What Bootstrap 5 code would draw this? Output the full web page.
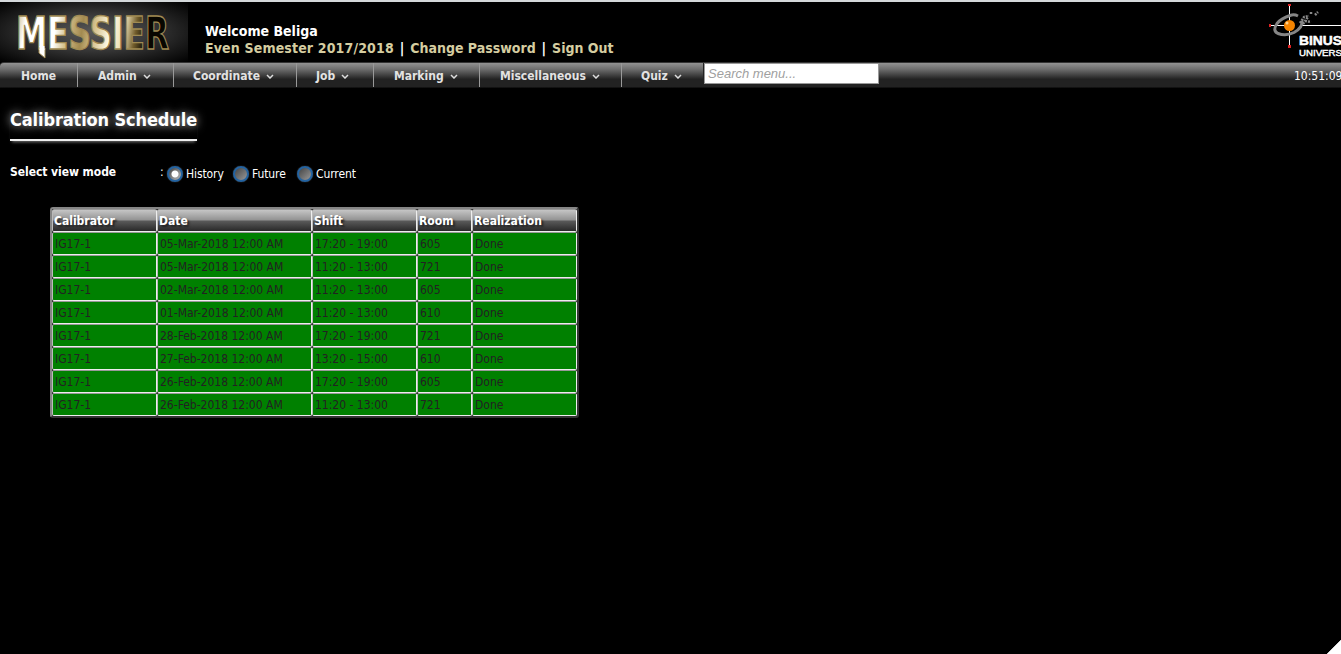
<!DOCTYPE html>
<html lang="en">
<head>
<meta charset="utf-8">
<title>Messier - Calibration Schedule</title>
<link href="https://cdn.jsdelivr.net/npm/bootstrap@5.3.0/dist/css/bootstrap.min.css" rel="stylesheet">
<style>
body{background:#000;color:#fff;font:12px/16px "DejaVu Sans Condensed","DejaVu Sans",sans-serif;font-stretch:condensed;height:654px;overflow:hidden}
.page{height:654px;border-top:2px solid #d4d8da;overflow:hidden}
.masthead{height:60px}
.brand{width:188px;height:60px;background:radial-gradient(ellipse at 50% 50%,#585858 0,#3a3a3a 40%,#1c1c1c 70%,#000 100%)}
.welcome{padding:21px 0 0 17px;font-size:14px;line-height:17px;font-weight:700}
.welcome a{color:#d5cda0;text-decoration:none}
.welcome .term{letter-spacing:.15px}
.welcome i{font-style:normal;margin:0 1.5px}
.uni{width:72px}
.menu{height:26px;border-top:1px solid #333;background:linear-gradient(#929292 0,#6d6d6d 25%,#3a3a3a 52%,#222 65%,#222 95%,#080808 100%);padding-left:1px;border-top-left-radius:4px}
.menu .nav-link{height:24px;padding:0 0 0 20px;line-height:26px;color:#e2e2e2;font-weight:700;border-right:1px solid #999;white-space:nowrap}
.menu .nav-link:nth-child(n+3){padding-left:19px}
.menu .nav-link:nth-child(5),.menu .nav-link:nth-child(6){padding-left:20px}
.menu .nav-link:nth-child(7){border-color:#222}
.menu .nav-link svg{margin-left:6px}
.finder{width:175px;height:21px;border:1px solid #999;border-radius:0;padding:0 3px;background:#fff;font:italic 13px "Liberation Sans",sans-serif}
.finder::placeholder{color:#a0a0a0}
.clock{width:47px;line-height:26px}
.title{width:187px;height:35px;margin:18px 0 0 10px;font-size:18px;line-height:27px;letter-spacing:-.12px;font-weight:700;white-space:nowrap;border-bottom:2px solid #eee;text-shadow:0 0 10px #ccc;box-shadow:0 3px 3px -2px #777}
.modes{margin:21px 0 0 10px;height:24px}
.modes b{width:150px;line-height:21px;letter-spacing:-.05px}
.modes label{letter-spacing:-.1px;line-height:14px}
.dot{width:16px;height:16px;margin-right:3px;border:2px solid #2463a0;border-radius:50%;background:linear-gradient(135deg,#444,#999);box-shadow:0 0 1px #888}
.dot.on{background:radial-gradient(circle,#fff 0 3px,transparent 4px),linear-gradient(135deg,#444,#bbb)}
.sched{width:529px;height:210px;margin:21px 0 0 50px;border:2px solid;border-color:#858585 #333 #333 #858585;border-radius:3px;table-layout:fixed;border-collapse:separate;border-spacing:0;background:#000}
.sched th,.sched td{height:23px;padding:0 0 0 2px;line-height:20px;white-space:nowrap;border:1px solid;border-color:#999 #eee #eee #bbb;border-radius:2px}
.sched th{background:linear-gradient(#c5c5c5 0,#929292 48%,#5a5a5a 52%,#292929 100%);text-shadow:2px 2px 2px #222;padding-left:1px}
.sched td{background:#008000;color:#222}
.fold{right:0;bottom:0;width:15px;height:15px;background:linear-gradient(135deg,transparent 50%,#fff 54%)}
</style>
</head>
<body>
<div class="page position-relative">
<header class="masthead d-flex">
  <div class="brand"><svg width="188" height="60" viewBox="0 2 188 60">
    <defs><linearGradient id="g" x1="0" y1="0" x2="188" y2="30" gradientUnits="userSpaceOnUse"><stop offset=".1" stop-color="#cbb887"/><stop offset=".15" stop-color="#fff"/><stop offset=".31" stop-color="#fff"/><stop offset=".37" stop-color="#d6c18c"/><stop offset=".45" stop-color="#a38a50"/><stop offset=".52" stop-color="#d8c693"/><stop offset=".6" stop-color="#fffbe9"/><stop offset=".67" stop-color="#eadcaf"/><stop offset=".73" stop-color="#715c2b"/><stop offset=".79" stop-color="#080600"/></linearGradient></defs>
    <text x="16" y="49" fill="url(#g)" stroke="#a08a52" stroke-width="1.300" font-family="DejaVu Sans Condensed,DejaVu Sans,sans-serif" font-weight="700" font-size="44" textLength="153" lengthAdjust="spacingAndGlyphs">MESSIER</text>
    <path d="M39 48h6v10l-6-5z" fill="#fff" stroke="#a08a52"/><path d="M39.500 46h5v4h-5z" fill="#fff"/>
    </svg></div>
  <div class="welcome"><div>Welcome Beliga</div><div><a class="term" href="#">Even Semester 2017/2018</a> <i>|</i> <a href="#">Change Password</a> <i>|</i> <a href="#">Sign Out</a></div></div>
  <div class="uni ms-auto"><svg width="72" height="60" viewBox="1269 2 72 60">
    <path d="M1289.5 4v43M1270 25.5h20M1301 25.5h40" stroke="#fff" fill="none"/>
    <path d="M1298 16q-4-2-8-.500-9 3-13 8-5 7 1 10 8 3 16-1 9-5 8-12" fill="none" stroke="#858585" stroke-width="3"/>
    <path d="M1300 23l4-6 5-1M1305 21l6 1M1311 14v-3M1315 15l3-3M1303 24l5-7" stroke="#888" stroke-width="2.500" stroke-dasharray="2 1" fill="none"/>
    <circle cx="1289.500" cy="25.500" r="5.500" fill="#f58400"/><circle cx="1287" cy="23" r="1.500" fill="#ffd28a"/>
    <path d="M1288 4h3v2h-3zM1288 45h3v3h-3zM1269 24h2v3h-2z" fill="#d22"/>
    <g fill="#fff" font-family="Liberation Sans,sans-serif" font-weight="700"><text x="1299" y="45" font-size="13.500" stroke="#fff" stroke-width=".5" textLength="43" lengthAdjust="spacingAndGlyphs">BINUS</text><text x="1299" y="55.500" font-size="9" font-weight="400" stroke="#fff" stroke-width=".4" textLength="43" lengthAdjust="spacingAndGlyphs">UNIVERS</text></g>
  </svg></div>
</header>
<nav class="menu d-flex">
  <a class="nav-link" style="width:77px">Home</a>
  <a class="nav-link" style="width:96px">Admin<svg width="8" height="5"><path d="M1 1l3 3 3-3" fill="none" stroke="#ddd" stroke-width="1.500"/></svg></a>
  <a class="nav-link" style="width:123px">Coordinate<svg width="8" height="5"><path d="M1 1l3 3 3-3" fill="none" stroke="#ddd" stroke-width="1.500"/></svg></a>
  <a class="nav-link" style="width:77px">Job<svg width="8" height="5"><path d="M1 1l3 3 3-3" fill="none" stroke="#ddd" stroke-width="1.500"/></svg></a>
  <a class="nav-link" style="width:106px">Marking<svg width="8" height="5"><path d="M1 1l3 3 3-3" fill="none" stroke="#ddd" stroke-width="1.500"/></svg></a>
  <a class="nav-link" style="width:142px">Miscellaneous<svg width="8" height="5"><path d="M1 1l3 3 3-3" fill="none" stroke="#ddd" stroke-width="1.500"/></svg></a>
  <a class="nav-link" style="width:82px">Quiz<svg width="8" height="5"><path d="M1 1l3 3 3-3" fill="none" stroke="#ddd" stroke-width="1.500"/></svg></a>
  <input class="finder" placeholder="Search menu...">
  <span class="clock ms-auto">10:51:09</span>
</nav>
<main>
  <h1 class="title">Calibration Schedule</h1>
  <div class="modes d-flex"><b>Select view mode</b><span style="width:7px;line-height:21px">:</span>
    <label class="d-flex align-items-center" style="width:66px"><span class="dot on"></span>History</label>
    <label class="d-flex align-items-center" style="width:64px"><span class="dot"></span>Future</label>
    <label class="d-flex align-items-center"><span class="dot"></span>Current</label></div>
  <table class="sched">
    <colgroup><col style="width:105px"><col style="width:155px"><col style="width:105px"><col style="width:55px"><col></colgroup>
    <thead><tr><th>Calibrator</th><th>Date</th><th>Shift</th><th>Room</th><th>Realization</th></tr></thead>
    <tbody>
    <tr><td>IG17-1</td><td>05-Mar-2018 12:00 AM</td><td>17:20 - 19:00</td><td>605</td><td>Done</td></tr>
    <tr><td>IG17-1</td><td>05-Mar-2018 12:00 AM</td><td>11:20 - 13:00</td><td>721</td><td>Done</td></tr>
    <tr><td>IG17-1</td><td>02-Mar-2018 12:00 AM</td><td>11:20 - 13:00</td><td>605</td><td>Done</td></tr>
    <tr><td>IG17-1</td><td>01-Mar-2018 12:00 AM</td><td>11:20 - 13:00</td><td>610</td><td>Done</td></tr>
    <tr><td>IG17-1</td><td>28-Feb-2018 12:00 AM</td><td>17:20 - 19:00</td><td>721</td><td>Done</td></tr>
    <tr><td>IG17-1</td><td>27-Feb-2018 12:00 AM</td><td>13:20 - 15:00</td><td>610</td><td>Done</td></tr>
    <tr><td>IG17-1</td><td>26-Feb-2018 12:00 AM</td><td>17:20 - 19:00</td><td>605</td><td>Done</td></tr>
    <tr><td>IG17-1</td><td>26-Feb-2018 12:00 AM</td><td>11:20 - 13:00</td><td>721</td><td>Done</td></tr>
    </tbody>
  </table>
</main>
<div class="fold position-absolute"></div>
</div>
<script src="https://cdn.jsdelivr.net/npm/bootstrap@5.3.0/dist/js/bootstrap.bundle.min.js"></script>
</body>
</html>
